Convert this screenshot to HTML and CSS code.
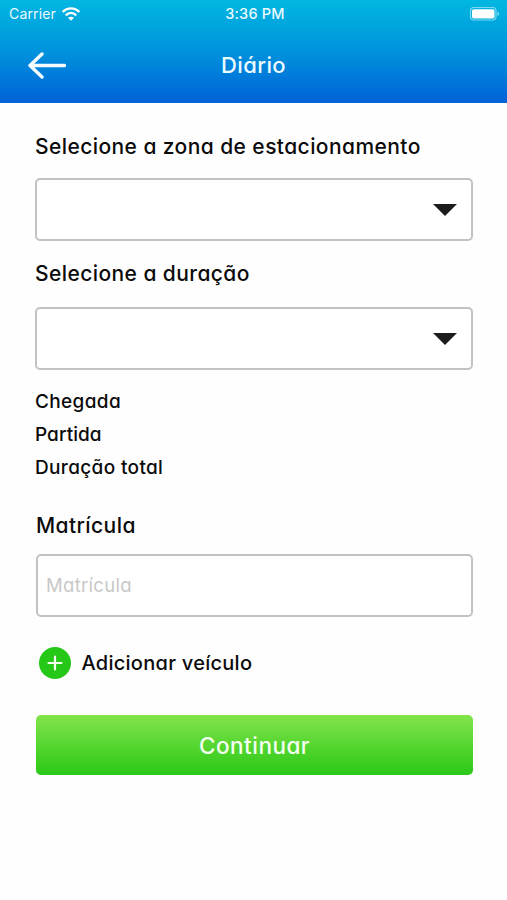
FILE: index.html
```html
<!DOCTYPE html>
<html lang="pt">
<head>
<meta charset="utf-8">
<title>Diário</title>
<link rel="stylesheet" href="styles.css">
</head>
<body>
<header class="header">
  <div class="status">
    <span class="carrier"><span>Carrier</span>
      <svg class="wifi" width="20" height="16" viewBox="0 0 20 16"><path d="M1.600 6C6.500 1.200 13.500 1.200 18.400 6"/><path d="M4.800 9.300c3.100-3 7.300-3 10.400 0"/><path class="dot" d="M7 11.800c1.700-1.500 4.300-1.500 6 0l-3 3z"/></svg>
    </span>
    <span class="time">3:36 PM</span>
    <svg class="battery" width="32" height="16" viewBox="0 0 32 16"><rect class="shell" x="1.500" y="1.500" width="25.500" height="12.500" rx="3.500"/><rect class="charge" x="3" y="3.200" width="22.500" height="9.400" rx="1.800"/><path class="tip" d="M28.500 5.500c2.200.8 2.200 3.800 0 4.600z"/></svg>
  </div>
  <nav class="nav">
    <svg class="back" width="38" height="28" viewBox="0 0 38 28"><path d="M36.500 14.500H2M14 3L2 14.500l12 11.500"/></svg>
    <h1 class="title">Diário</h1>
  </nav>
</header>
<main class="form">
  <label class="label">Selecione a zona de estacionamento</label>
  <div class="field zone"><svg class="caret" width="24" height="12" viewBox="0 0 24 12"><path d="M0 0h24L12 12z"/></svg></div>
  <label class="label">Selecione a duração</label>
  <div class="field duration"><svg class="caret" width="24" height="12" viewBox="0 0 24 12"><path d="M0 0h24L12 12z"/></svg></div>
  <ul class="summary">
    <li>Chegada</li>
    <li class="leave">Partida</li>
    <li>Duração total</li>
  </ul>
  <label class="label plate-label">Matrícula</label>
  <div class="field plate">Matrícula</div>
  <div class="add">
    <svg width="32" height="32" viewBox="0 0 32 32"><circle cx="16" cy="16" r="16"/><path d="M16 9.500v13M9.500 16h13"/></svg>
    <span>Adicionar veículo</span>
  </div>
  <div class="button">Continuar</div>
</main>
</body>
</html>
```
FILE: styles.css
```css
* { box-sizing: border-box; }
body {
  margin: 0;
  min-height: 900px;
  background: #fefefe;
  color: #0b0b0b;
  font-family: Inter, "Open Sans", sans-serif;
  font-feature-settings: "cv11" 1;
  font-weight: 500;
  white-space: nowrap;
}
.header {
  height: 103px;
  background: linear-gradient(#01b7e1, #0094dc 48%, #0062d8);
  color: #eafaff;
}
.status {
  height: 27px;
  display: grid;
  grid-template-columns: 1fr auto 1fr;
  align-items: center;
  padding: 0 6px 0 9px;
  font-feature-settings: normal;
}
.carrier { display: flex; align-items: center; gap: 5px; font-weight: 400; font-size: 14px; letter-spacing: 0.15px; }
.time { font-size: 14.5px; letter-spacing: 0.2px; }
.wifi { fill: none; stroke: #fff; stroke-width: 2.4; }
.wifi .dot { fill: #fff; stroke: none; }
.battery { justify-self: end; }
.shell { fill: none; stroke: #7dd9f0; stroke-width: 1.2; }
.charge { fill: #fff; }
.tip { fill: #7dd9f0; }
.nav {
  height: 76px;
  display: grid;
  grid-template-columns: 100px 1fr 100px;
  align-items: center;
}
.back { margin-left: 28px; fill: none; stroke: #f4fcff; stroke-width: 3.4; stroke-linecap: round; stroke-linejoin: round; }
.title { margin: 0; text-align: center; font-size: 22px; line-height: 30px; font-weight: 500; letter-spacing: 0.4px; }
.form { padding: 29px 34px 0 35px; }
.label { display: block; height: 30px; line-height: 30px; font-size: 21px; letter-spacing: 0.42px; }
.field {
  height: 63px;
  border: 2px solid #c2c2c2;
  border-radius: 5px;
  background: #fff;
  display: flex;
  align-items: center;
}
.zone { margin: 16px 0 18px; justify-content: flex-end; padding-right: 14.5px; }
.duration { margin: 18px 0 15px; justify-content: flex-end; padding-right: 14.5px; }
.caret { fill: #1c1c1c; }
.summary { margin: 0; padding: 0; list-style: none; font-size: 19px; line-height: 33px; letter-spacing: 0.35px; }
.leave { letter-spacing: 0.05px; }
.plate-label { margin: 27px 0 13px 1px; }
.plate { margin-left: 1px; padding-left: 8px; padding-bottom: 1px; color: #c8c8c8; font-size: 18.5px; font-weight: 400; letter-spacing: 0.3px; }
.add { margin: 30px 0 36px 3.5px; height: 32px; display: flex; align-items: center; gap: 11px; font-size: 20px; letter-spacing: 0.27px; }
.add circle { fill: #25c817; }
.add path { stroke: #f4fff2; stroke-width: 2.2; stroke-linecap: round; }
.button {
  margin-left: 1px;
  height: 60px;
  border-radius: 5px;
  background: linear-gradient(#82e44a, #2bc817);
  color: #f2fff0;
  display: flex;
  align-items: center;
  justify-content: center;
  font-size: 22.5px;
  letter-spacing: 0.5px;
}
```
